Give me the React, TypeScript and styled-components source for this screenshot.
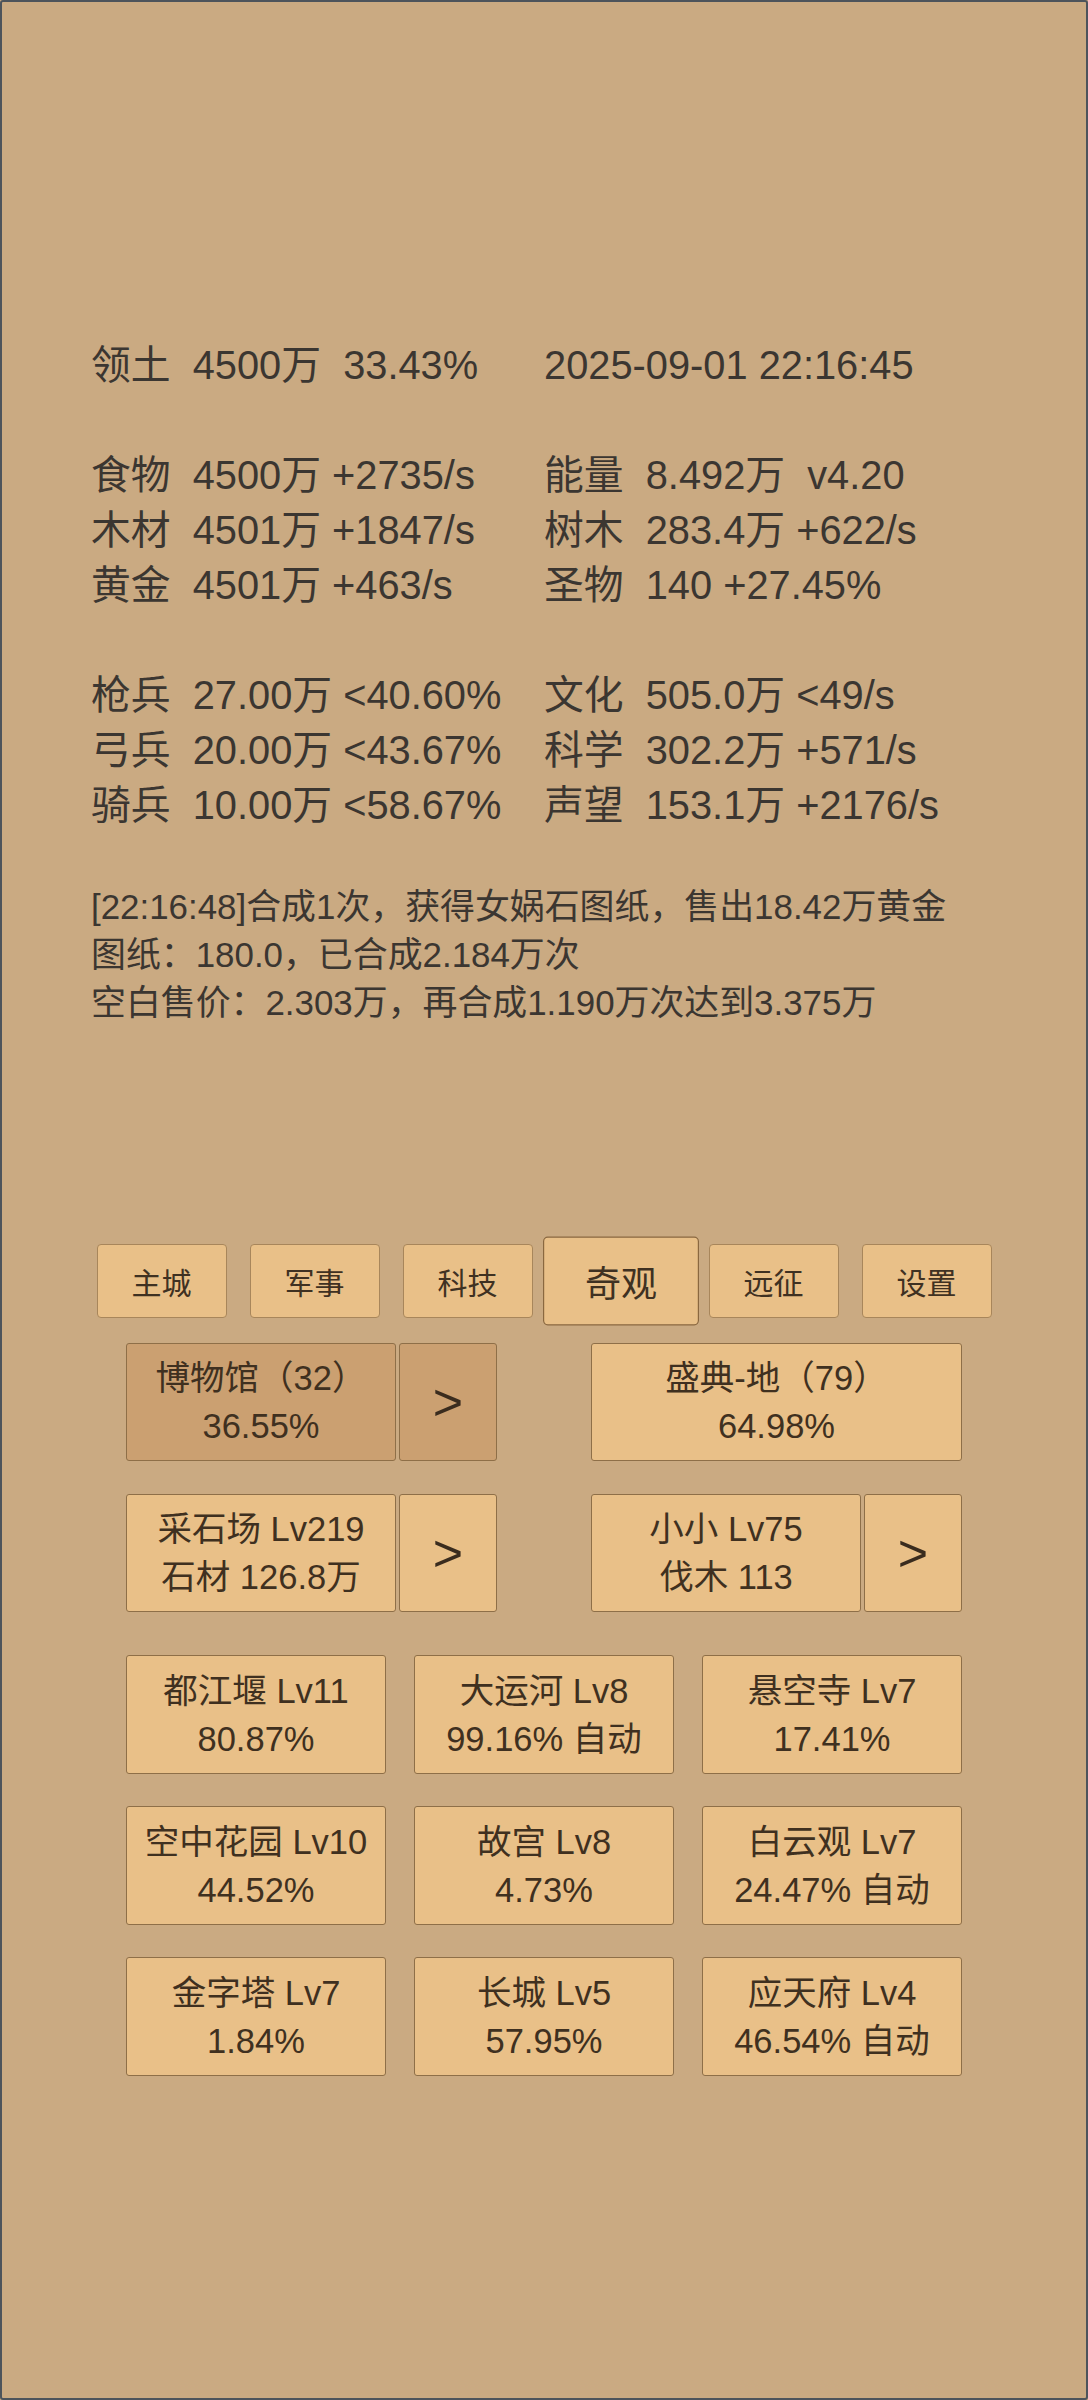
import React from "react";
import styled, { createGlobalStyle } from "styled-components";

const GlobalStyle = createGlobalStyle`
  html, body {
    margin: 0;
    padding: 0;
    background: #caaa82;
  }
  * {
    box-sizing: border-box;
  }
`;

const FONT = `"Liberation Sans", Arial, "Noto Sans CJK SC", sans-serif`;

const stats: [string, string][] = [
  ["领土  4500万  33.43%", "2025-09-01 22:16:45"],
  ["", ""],
  ["食物  4500万 +2735/s", "能量  8.492万  v4.20"],
  ["木材  4501万 +1847/s", "树木  283.4万 +622/s"],
  ["黄金  4501万 +463/s", "圣物  140 +27.45%"],
  ["", ""],
  ["枪兵  27.00万 <40.60%", "文化  505.0万 <49/s"],
  ["弓兵  20.00万 <43.67%", "科学  302.2万 +571/s"],
  ["骑兵  10.00万 <58.67%", "声望  153.1万 +2176/s"],
];

const logLines = [
  "[22:16:48]合成1次，获得女娲石图纸，售出18.42万黄金",
  "图纸：180.0，已合成2.184万次",
  "空白售价：2.303万，再合成1.190万次达到3.375万",
];

const tabs = ["主城", "军事", "科技", "奇观", "远征", "设置"];

const wonders = [
  ["都江堰 Lv11", "80.87%"],
  ["大运河 Lv8", "99.16% 自动"],
  ["悬空寺 Lv7", "17.41%"],
  ["空中花园 Lv10", "44.52%"],
  ["故宫 Lv8", "4.73%"],
  ["白云观 Lv7", "24.47% 自动"],
  ["金字塔 Lv7", "1.84%"],
  ["长城 Lv5", "57.95%"],
  ["应天府 Lv4", "46.54% 自动"],
];

export default function App() {
  return (
    <>
      <GlobalStyle />
      <Page>
        <Stats>
          {stats.map(([left, right], i) => (
            <React.Fragment key={i}>
              <StatLine>{left}</StatLine>
              <StatLine>{right}</StatLine>
            </React.Fragment>
          ))}
        </Stats>

        <Log>
          {logLines.map((l) => (
            <LogLine key={l}>{l}</LogLine>
          ))}
        </Log>

        <TabBar>
          {tabs.map((t) => (
            <Tab key={t} $active={t === "奇观"}>
              {t}
            </Tab>
          ))}
        </TabBar>

        <PairRows>
          <PairRow>
            <Group>
              <Card $dark>
                <span>博物馆（32）</span>
                <span>36.55%</span>
              </Card>
              <ArrowButton $dark>&gt;</ArrowButton>
            </Group>
            <Group>
              <Card $wide>
                <span>盛典-地（79）</span>
                <span>64.98%</span>
              </Card>
            </Group>
          </PairRow>
          <PairRow>
            <Group>
              <Card>
                <span>采石场 Lv219</span>
                <span>石材 126.8万</span>
              </Card>
              <ArrowButton>&gt;</ArrowButton>
            </Group>
            <Group>
              <Card>
                <span>小小 Lv75</span>
                <span>伐木 113</span>
              </Card>
              <ArrowButton>&gt;</ArrowButton>
            </Group>
          </PairRow>
        </PairRows>

        <WonderGrid>
          {wonders.map(([name, pct]) => (
            <WonderCard key={name}>
              <span>{name}</span>
              <span>{pct}</span>
            </WonderCard>
          ))}
        </WonderGrid>
      </Page>
    </>
  );
}

const Page = styled.div`
  width: 1088px;
  height: 2400px;
  border: 2px solid #4d545b;
  border-radius: 3px;
  background: #caaa82;
  padding-top: 336px;
  font-family: ${FONT};
  display: flex;
  flex-direction: column;
`;

const Stats = styled.div`
  display: grid;
  grid-template-columns: 453px 452px;
  padding-left: 89px;
`;

const StatLine = styled.div`
  height: 55px;
  line-height: 55px;
  font-size: 39.8px;
  color: #3b3631;
  white-space: pre;
`;

const Log = styled.div`
  margin-top: 50px;
  padding-left: 89px;
`;

const LogLine = styled.div`
  height: 48px;
  line-height: 48px;
  font-size: 34.9px;
  color: #3b3631;
  white-space: pre;
`;

const TabBar = styled.div`
  margin-top: 217px;
  display: flex;
  justify-content: center;
  gap: 23px;
`;

const Tab = styled.div<{ $active?: boolean }>`
  width: 130px;
  height: 74px;
  display: flex;
  align-items: center;
  justify-content: center;
  background: #e9c088;
  border: 1.5px solid ${(p) => (p.$active ? "#8a6840" : "#a8865b")};
  border-radius: 4px;
  font-size: 30px;
  color: #3f3122;
  transform: ${(p) => (p.$active ? "scale(1.2)" : "none")};
`;

const PairRows = styled.div`
  margin-top: 25px;
  display: flex;
  flex-direction: column;
  gap: 33px;
`;

const PairRow = styled.div`
  display: flex;
  justify-content: center;
  gap: 94px;
`;

const Group = styled.div`
  width: 371px;
  display: flex;
  gap: 3px;
`;

const Card = styled.div<{ $dark?: boolean; $wide?: boolean }>`
  width: ${(p) => (p.$wide ? "371px" : "270px")};
  height: 118px;
  display: flex;
  flex-direction: column;
  align-items: center;
  justify-content: center;
  background: ${(p) => (p.$dark ? "#cba071" : "#e9c088")};
  border: 1px solid #8e6f48;
  border-radius: 3px;
  font-size: 34.5px;
  line-height: 48px;
  color: #3f3020;
  white-space: pre;
`;

const ArrowButton = styled.div<{ $dark?: boolean }>`
  width: 98px;
  height: 118px;
  display: flex;
  align-items: center;
  justify-content: center;
  background: ${(p) => (p.$dark ? "#cba071" : "#e9c088")};
  border: 1px solid #8e6f48;
  border-radius: 3px;
  font-size: 52px;
  color: #3a2c1e;
`;

const WonderGrid = styled.div`
  margin-top: 43px;
  display: grid;
  grid-template-columns: repeat(3, 260px);
  grid-auto-rows: 119px;
  column-gap: 28px;
  row-gap: 32px;
  justify-content: center;
`;

const WonderCard = styled.div`
  display: flex;
  flex-direction: column;
  align-items: center;
  justify-content: center;
  background: #e9c088;
  border: 1px solid #8e6f48;
  border-radius: 3px;
  font-size: 34.5px;
  line-height: 48px;
  color: #3f3020;
  white-space: pre;
`;
